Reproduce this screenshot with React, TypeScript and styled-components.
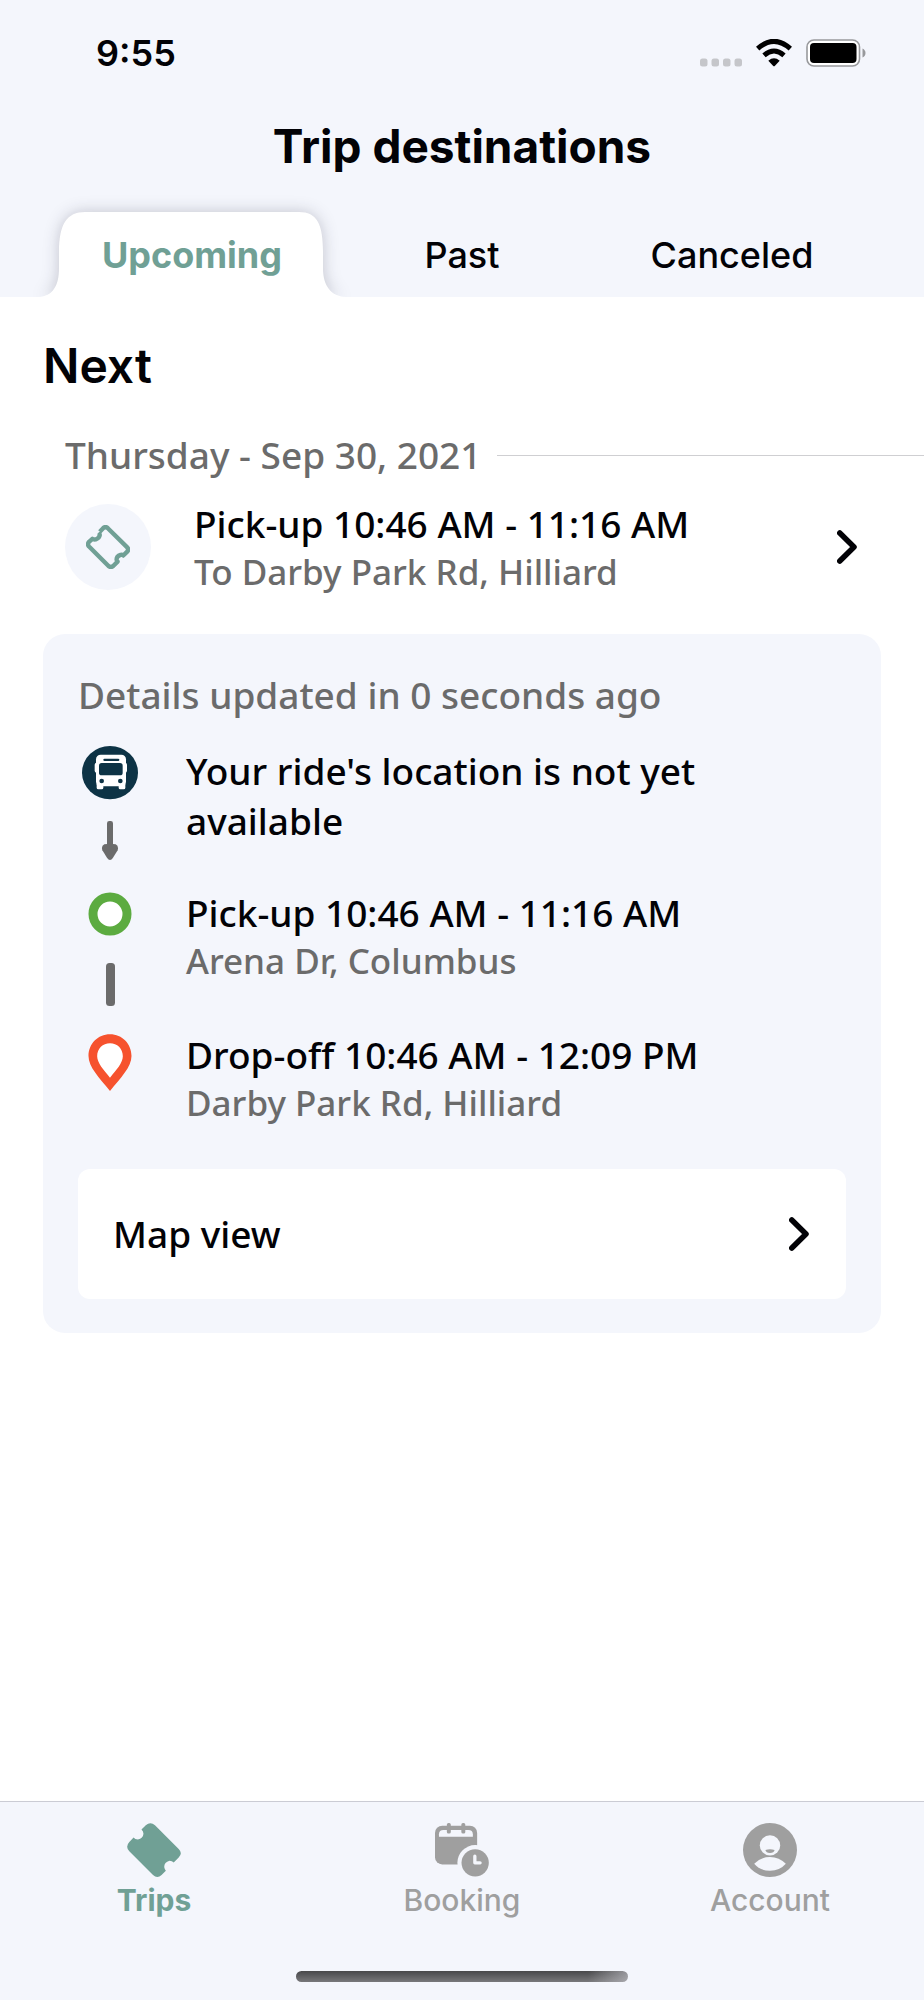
import React from "react";
import styled, { createGlobalStyle } from "styled-components";

const color = {
  ink: "#020206",
  muted: "#6b6b6b",
  accent: "#70a095",
  surface: "#f4f6fc",
  idle: "#9f9f9f",
  line: "#cfcfd2",
};

const uiFont = `Inter, "Liberation Sans", sans-serif`;
const bodyFont = `"Noto Sans", "Open Sans", sans-serif`;

const GlobalStyle = createGlobalStyle`
  *, *::before, *::after { box-sizing: border-box; }
  body { margin: 0; background: #fff; color: ${color.ink}; font-family: ${bodyFont}; }
  h1, h2, h3, p, ol { margin: 0; padding: 0; }
  button { border: 0; padding: 0; background: none; color: inherit; font: inherit; text-align: left; cursor: pointer; }
  a { color: inherit; text-decoration: none; }
  svg { display: block; flex: none; }
`;

const Screen = styled.div`
  min-height: 100vh;
  display: flex;
  flex-direction: column;
`;

const Header = styled.header`
  background: ${color.surface};
  font-family: ${uiFont};
`;

const StatusBar = styled.div`
  display: flex;
  align-items: center;
  justify-content: space-between;
  padding: 31px 58px 0 96px;
  font-size: 36px;
  line-height: 44px;
  font-weight: 600;
`;

const StatusIcons = styled.div`
  display: flex;
  align-items: center;
  gap: 14px;
`;

const Title = styled.h1`
  padding: 43px 0 38px;
  text-align: center;
  font-size: 46px;
  line-height: 56px;
  font-weight: 700;
`;

const Tabs = styled.div`
  display: grid;
  grid-template-columns: repeat(3, 1fr);
  padding: 0 57px;
`;

const Tab = styled.button<{ $active?: boolean }>`
  position: relative;
  height: 85px;
  text-align: center;
  font-size: 36px;
  line-height: 44px;
  font-weight: ${(p) => (p.$active ? 700 : 500)};
  color: ${(p) => (p.$active ? color.accent : color.ink)};
`;

const TabLabel = styled.span`
  position: relative;
`;

const TabShape = styled.svg`
  position: absolute;
  top: 0;
  left: -18px;
  width: calc(100% + 36px);
  height: 100%;
  overflow: visible;
  filter: drop-shadow(0 0 8px rgba(20, 20, 40, 0.22));
`;

const Main = styled.main`
  position: relative;
  flex: 1;
  padding: 41px 0 48px;
  background: #fff;
`;

const SectionTitle = styled.h2`
  padding: 0 43px;
  font-family: ${uiFont};
  font-size: 48px;
  line-height: 56px;
  font-weight: 600;
`;

const DateRow = styled.div`
  display: flex;
  align-items: center;
  gap: 16px;
  padding: 37px 0 20px 65px;
  &::after {
    content: "";
    flex: 1;
    height: 1px;
    background: ${color.line};
  }
`;

const Caption = styled.h3`
  font-size: 37px;
  line-height: 48px;
  font-weight: 500;
  color: ${color.muted};
`;

const TripRow = styled.button`
  width: 100%;
  display: flex;
  align-items: center;
  gap: 43px;
  padding: 0 67px 0 65px;
`;

const TicketBadge = styled.span`
  flex: none;
  display: grid;
  place-items: center;
  width: 86px;
  height: 86px;
  border-radius: 50%;
  background: ${color.surface};
`;

const TextBlock = styled.span`
  flex: 1;
  min-width: 0;
  display: flex;
  flex-direction: column;
`;

const Primary = styled.span`
  font-size: 37px;
  line-height: 50px;
  font-weight: 500;
`;

const Secondary = styled.span`
  font-size: 35px;
  line-height: 46px;
  font-weight: 500;
  color: ${color.muted};
`;

const Card = styled.section`
  margin: 39px 43px 0;
  padding: 37px 35px 34px;
  border-radius: 22px;
  background: ${color.surface};
`;

const Steps = styled.ol`
  list-style: none;
  padding: 27px 0 43px;
`;

const Step = styled.li`
  display: flex;
  gap: 44px;
  &:not(:last-child) {
    min-height: 142px;
  }
`;

const Rail = styled.div`
  flex: none;
  width: 64px;
  display: flex;
  flex-direction: column;
  align-items: center;
  gap: 11px;
`;

const MapButton = styled.button`
  width: 100%;
  display: flex;
  align-items: center;
  justify-content: space-between;
  padding: 40px 37px 40px 35px;
  border-radius: 12px;
  background: #fff;
`;

const BottomBar = styled.nav`
  border-top: 1px solid #cbccd4;
  background: ${color.surface};
  font-family: ${uiFont};
`;

const NavItems = styled.div`
  display: grid;
  grid-template-columns: repeat(3, 1fr);
  padding: 21px 0 53px;
`;

const NavItem = styled.a<{ $active?: boolean }>`
  display: flex;
  flex-direction: column;
  align-items: center;
  gap: 5px;
  font-size: 30px;
  line-height: 36px;
  font-weight: ${(p) => (p.$active ? 700 : 500)};
  color: ${(p) => (p.$active ? color.accent : color.idle)};
`;

const HomeIndicator = styled.div`
  width: 36%;
  height: 11px;
  margin: 0 auto 18px;
  border-radius: 6px;
  background: linear-gradient(90deg, transparent 88%, rgba(200, 200, 206, 0.6)),
    linear-gradient(#48484a, #78787b);
`;

const SignalDots = () => (
  <svg width="42" height="28" viewBox="0 0 42 28" fill="#c5c6ca" aria-hidden="true">
    {[0, 11.5, 23, 34.5].map((x) => (
      <rect key={x} x={x} y="19.500" width="7.5" height="8" rx="2.5" />
    ))}
  </svg>
);

const WifiIcon = () => (
  <svg width="36" height="28" viewBox="0 0 108 84" aria-hidden="true">
    <g fill="none" stroke="#000" strokeWidth="15">
      <path d="M5 29Q54-15 103 29" />
      <path d="M24 49Q54 23 84 49" />
    </g>
    <path d="M37 65Q54 51 71 65L57 80Q54 83 51 80Z" />
  </svg>
);

const BatteryIcon = () => (
  <svg width="60" height="28" viewBox="0 0 60 28" aria-hidden="true">
    <rect x="1" y="1" width="52.5" height="26" rx="7" fill="#fff" stroke="#98999c" strokeWidth="1.6" />
    <rect x="4" y="4" width="46.5" height="20" rx="4" />
    <path d="M56.5 9.5Q59.5 11 59.5 14T56.5 18.5Z" fill="#98999c" />
  </svg>
);

const Chevron = () => (
  <svg width="20" height="34" viewBox="0 0 20 34" fill="none" stroke={color.ink} strokeWidth="5.500" strokeLinecap="round" strokeLinejoin="round" aria-hidden="true">
    <path d="M2.8 3L17 17 2.8 31" />
  </svg>
);

const TicketOutline = () => (
  <svg width="44" height="44" viewBox="0 0 131 131" fill="none" stroke={color.accent} strokeWidth="13" strokeLinejoin="round" aria-hidden="true">
    <path d="M41 20L51 9.500Q58 3 65 9.500L122 66Q129 73 122 80L111 91Q108 88 103 89Q91 93 91 103Q91 107 94 109L81 122Q74 128 67 122L9 64Q3 57 9 50L19 41Q22 44 29 43Q40 39 41 30Q41 25 38 22" />
  </svg>
);

const TicketSolid = () => (
  <svg width="54" height="54" viewBox="0 0 164 164" fill="currentColor" aria-hidden="true">
    <path d="M44 20L57 7Q71-6 85 7L157 79Q170 92 157 105L142 120Q137 115 129 115Q113 119 113 134Q114 140 118 145L105 158Q92 170 79 158L7 86Q-6 72 7 58L20 44Q24 50 33 50Q49 47 50 33Q50 25 44 20Z" />
  </svg>
);

const BookingIcon = () => (
  <svg width="54" height="54" viewBox="0 0 164 164" fill="currentColor" aria-hidden="true">
    <rect y="8" width="128" height="118" rx="22" />
    <path d="M12 42V34Q12 21 26 21H101Q115 21 115 34V42Z" fill={color.surface} />
    <rect x="36" width="12" height="32" rx="5" />
    <rect x="80" width="12" height="32" rx="5" />
    <circle cx="122" cy="121" r="54" fill={color.surface} />
    <circle cx="122" cy="121" r="41.500" />
    <path d="M121 101V121H137" fill="none" stroke={color.surface} strokeWidth="10" strokeLinecap="round" strokeLinejoin="round" />
  </svg>
);

const AccountIcon = () => (
  <svg width="54" height="54" viewBox="0 0 164 164" fill="currentColor" aria-hidden="true">
    <circle cx="82" cy="82" r="82" />
    <g fill={color.surface}>
      <circle cx="82" cy="68" r="31" />
      <path d="M34 124Q54 103 82 103T130 124Q112 145 82 145T34 124Z" />
    </g>
    <path d="M68 82Q82 77 96 82Q94 91 82 91T68 82Z" />
  </svg>
);

const BusMarker = () => (
  <svg width="56" height="64" viewBox="0 0 168 192" aria-hidden="true">
    <ellipse cx="84" cy="80" rx="84" ry="80" fill="#0d3345" />
    <g fill="#fff">
      <rect x="42" y="26" width="90" height="95" rx="14" />
      <rect x="38" y="50" width="97" height="30" rx="6" />
      <rect x="44" y="110" width="20" height="20" rx="5" />
      <rect x="110" y="110" width="20" height="20" rx="5" />
    </g>
    <g fill="#0d3345">
      <rect x="64" y="38" width="48" height="7" rx="3.500" />
      <rect x="51" y="51" width="71" height="37" rx="8" />
      <circle cx="59" cy="105" r="7" />
      <circle cx="115" cy="105" r="7" />
    </g>
  </svg>
);

const PickupMarker = () => (
  <svg width="56" height="64" viewBox="0 0 56 64" aria-hidden="true">
    <circle cx="28" cy="26" r="17" fill="#fff" stroke="#5cab40" strokeWidth="9" />
  </svg>
);

const DropoffMarker = () => (
  <svg width="56" height="64" viewBox="-19.500 -13 168 192" aria-hidden="true">
    <path d="M64.500 0C28 0 0 29 0 65C0 98 32 130 64.500 170C97 130 129 98 129 65C129 29 101 0 64.500 0Z" fill="#f6522e" />
    <path d="M64.500 27C43 27 26 43 26 66C26 86 46 108 64.500 130C83 108 103 86 103 66C103 43 86 27 64.500 27Z" fill="#fff" />
  </svg>
);

const ArrowConnector = () => (
  <svg width="18" height="40" viewBox="0 0 54 120" fill={color.muted} aria-hidden="true">
    <rect x="18" width="18" height="90" rx="7" />
    <path d="M10 70Q27 66 44 70Q54 75 50 88L36 110Q27 124 18 110L4 88Q0 75 10 70Z" />
  </svg>
);

const LineConnector = () => (
  <svg width="9" height="43" viewBox="0 0 9 43" fill={color.muted} aria-hidden="true">
    <rect width="9" height="43" rx="3.500" />
  </svg>
);

export default function App() {
  return (
    <Screen>
      <GlobalStyle />
      <Header>
        <StatusBar>
          <span>9:55</span>
          <StatusIcons>
            <SignalDots />
            <WifiIcon />
            <BatteryIcon />
          </StatusIcons>
        </StatusBar>
        <Title>Trip destinations</Title>
        <Tabs role="tablist">
          <Tab $active role="tab" aria-selected="true">
            <TabShape viewBox="0 0 306 85" preserveAspectRatio="none" aria-hidden="true">
              <path d="M0 85C13 84 20 75 20 56V40C20 12 28 0 46 0H260C278 0 284 12 284 40V56C284 75 293 84 306 85Z" fill="#fff" />
            </TabShape>
            <TabLabel>Upcoming</TabLabel>
          </Tab>
          <Tab role="tab" aria-selected="false">Past</Tab>
          <Tab role="tab" aria-selected="false">Canceled</Tab>
        </Tabs>
      </Header>

      <Main>
        <SectionTitle>Next</SectionTitle>
        <DateRow>
          <Caption>Thursday - Sep 30, 2021</Caption>
        </DateRow>
        <TripRow>
          <TicketBadge>
            <TicketOutline />
          </TicketBadge>
          <TextBlock>
            <Primary>Pick-up 10:46 AM - 11:16 AM</Primary>
            <Secondary>To Darby Park Rd, Hilliard</Secondary>
          </TextBlock>
          <Chevron />
        </TripRow>

        <Card>
          <Caption>Details updated in 0 seconds ago</Caption>
          <Steps>
            <Step>
              <Rail>
                <BusMarker />
                <ArrowConnector />
              </Rail>
              <TextBlock>
                <Primary>Your ride's location is not yet available</Primary>
              </TextBlock>
            </Step>
            <Step>
              <Rail>
                <PickupMarker />
                <LineConnector />
              </Rail>
              <TextBlock>
                <Primary>Pick-up 10:46 AM - 11:16 AM</Primary>
                <Secondary>Arena Dr, Columbus</Secondary>
              </TextBlock>
            </Step>
            <Step>
              <Rail>
                <DropoffMarker />
              </Rail>
              <TextBlock>
                <Primary>Drop-off 10:46 AM - 12:09 PM</Primary>
                <Secondary>Darby Park Rd, Hilliard</Secondary>
              </TextBlock>
            </Step>
          </Steps>
          <MapButton>
            <Primary>Map view</Primary>
            <Chevron />
          </MapButton>
        </Card>
      </Main>

      <BottomBar>
        <NavItems>
          <NavItem $active href="#trips" aria-current="page">
            <TicketSolid />
            Trips
          </NavItem>
          <NavItem href="#booking">
            <BookingIcon />
            Booking
          </NavItem>
          <NavItem href="#account">
            <AccountIcon />
            Account
          </NavItem>
        </NavItems>
        <HomeIndicator />
      </BottomBar>
    </Screen>
  );
}
